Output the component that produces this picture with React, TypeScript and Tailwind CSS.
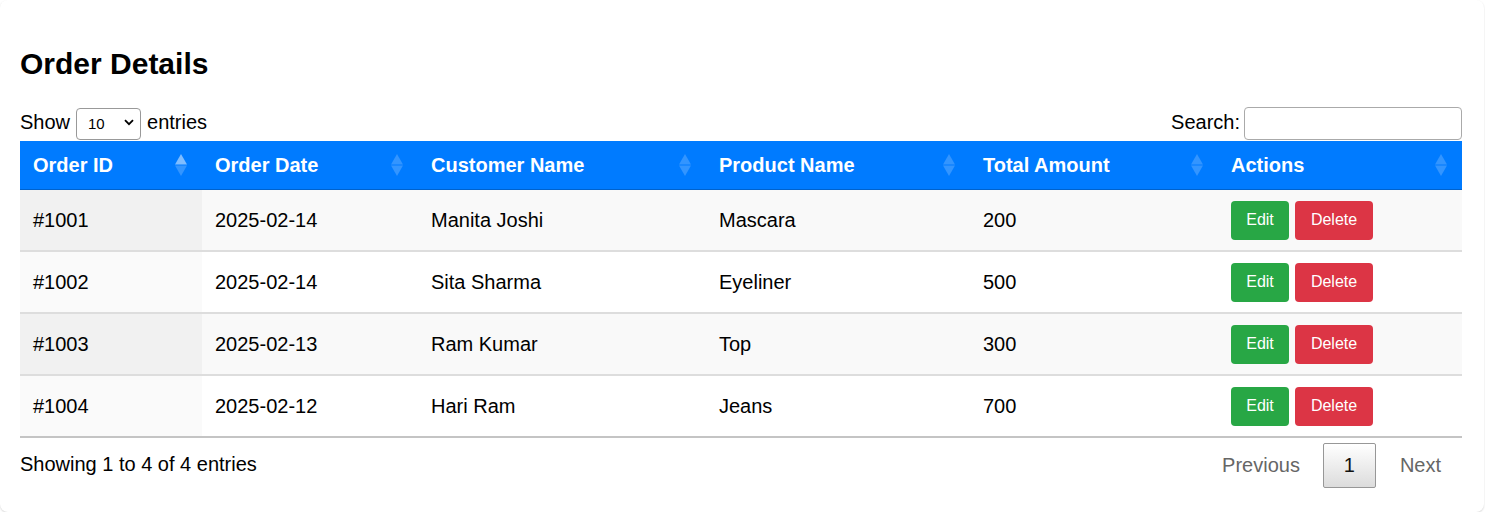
import React from "react";

const rows = [
  ["#1001", "2025-02-14", "Manita Joshi", "Mascara", "200"],
  ["#1002", "2025-02-14", "Sita Sharma", "Eyeliner", "500"],
  ["#1003", "2025-02-13", "Ram Kumar", "Top", "300"],
  ["#1004", "2025-02-12", "Hari Ram", "Jeans", "700"],
];

const headers = [
  { label: "Order ID", w: "w-[182px]", active: true },
  { label: "Order Date", w: "w-[216px]", active: false },
  { label: "Customer Name", w: "w-[288px]", active: false },
  { label: "Product Name", w: "w-[264px]", active: false },
  { label: "Total Amount", w: "w-[248px]", active: false },
  { label: "Actions", w: "w-[244px]", active: false },
];

function SortIcon({ active }: { active: boolean }) {
  return (
    <svg width="12" height="22" viewBox="0 0 12 22" className="shrink-0">
      <polygon points="6,0 12,10.5 0,10.5" fill="#ffffff" fillOpacity={active ? 0.5 : 0.2} />
      <polygon points="0,11.5 12,11.5 6,22" fill="#ffffff" fillOpacity={0.2} />
    </svg>
  );
}

export default function App() {
  return (
    <div className="bg-white" style={{ fontFamily: '"Liberation Sans", Arial, sans-serif' }}>
      <div className="w-[1484px] h-[512px] bg-white rounded-lg shadow-[0_1px_2px_rgba(0,0,0,0.16)] px-5 text-black">
        <h2 className="pt-[47px] text-[30px] leading-[34px] font-bold">Order Details</h2>

        <div className="mt-[26px] flex items-center justify-between w-[1442px] h-[33px] text-[20px]">
          <div className="flex items-center">
            <span className="pb-[4px]">Show</span>
            <div className="relative ml-[6px] mr-[6px]">
              <select className="appearance-none w-[65px] h-[32px] border border-[#999] rounded-[4px] pl-[11px] text-[15px] bg-white">
                <option>10</option>
              </select>
              <svg className="absolute right-[7px] top-[12px] pointer-events-none" width="10" height="7" viewBox="0 0 10 7">
                <path d="M1 1.2 L5 5.2 L9 1.2" stroke="#000" strokeWidth="1.8" fill="none" />
              </svg>
            </div>
            <span className="pb-[4px]">entries</span>
          </div>
          <div className="flex items-center">
            <span className="pb-[4px]">Search:</span>
            <input className="ml-[4px] w-[218px] h-[33px] border border-[#aaa] rounded-[4px] bg-white" />
          </div>
        </div>

        <table className="mt-px w-[1442px] border-separate border-spacing-0 table-fixed text-[20px]">
          <thead>
            <tr className="bg-[#007bff] text-white">
              {headers.map((h) => (
                <th key={h.label} className={`${h.w} h-[49px] p-0 border-b border-[#0062cc] text-left font-bold`}>
                  <div className="flex items-center justify-between pl-[13px] pr-[15px]">
                    <span>{h.label}</span>
                    <SortIcon active={h.active} />
                  </div>
                </th>
              ))}
            </tr>
          </thead>
          <tbody>
            {rows.map((r, i) => {
              const odd = i % 2 === 0;
              const last = i === rows.length - 1;
              const border = last ? "border-b-2 border-[#c4c4c4]" : "border-b-2 border-[#dddddd]";
              const base = odd ? "bg-[#f9f9f9]" : "bg-white";
              const first = odd ? "bg-[#f1f1f1]" : "bg-[#fafafa]";
              return (
                <tr key={r[0]}>
                  {r.map((c, j) => (
                    <td key={j} className={`h-[62px] pl-[13px] p-0 ${border} ${j === 0 ? first : base}`}>
                      {c}
                    </td>
                  ))}
                  <td className={`h-[62px] pl-[13px] p-0 ${border} ${base}`}>
                    <div className="flex items-center gap-[6px]">
                      <button className="w-[58px] h-[39px] rounded-[4px] bg-[#28a745] text-white text-[16px]">Edit</button>
                      <button className="w-[78px] h-[39px] rounded-[4px] bg-[#dc3545] text-white text-[16px]">Delete</button>
                    </div>
                  </td>
                </tr>
              );
            })}
          </tbody>
        </table>

        <div className="mt-[5px] w-[1442px] flex items-center justify-between text-[20px]">
          <span className="pb-[4px]">Showing 1 to 4 of 4 entries</span>
          <div className="flex items-center">
            <span className="pb-[2px] text-[#666] mr-[23px]">Previous</span>
            <span className="w-[53px] h-[45px] pb-[2px] flex items-center justify-center border border-[#979797] rounded-[2px] bg-gradient-to-b from-white to-[#dcdcdc] text-[#111]">1</span>
            <span className="pb-[2px] text-[#666] ml-[24px] mr-[21px]">Next</span>
          </div>
        </div>
      </div>
    </div>
  );
}
